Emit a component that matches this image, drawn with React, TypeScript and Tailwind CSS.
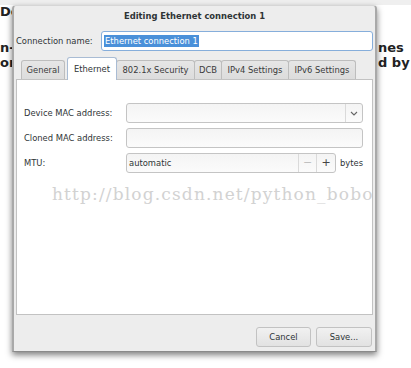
import React from "react";

const TABS = [
  { label: "General", w: "w-[44px]" },
  { label: "Ethernet", w: "w-[50px]", active: true },
  { label: "802.1x Security", w: "w-[79px]" },
  { label: "DCB", w: "w-[28px]" },
  { label: "IPv4 Settings", w: "w-[68px]" },
  { label: "IPv6 Settings", w: "w-[68px]" },
];

function Field({ children }: { children?: React.ReactNode }) {
  return (
    <div className="h-[20px] w-[237px] rounded-[3px] border border-[#c4c4c4] bg-gradient-to-b from-[#f4f4f4] to-[#fbfbfb] flex items-center">
      {children}
    </div>
  );
}

export default function App() {
  return (
    <div className="relative w-[411px] h-[368px] overflow-hidden bg-white font-['DejaVu_Sans',sans-serif] text-[#2e3436]">
      {/* page behind the dialog */}
      <div className="h-[5px] bg-[#efefef]" />
      <div className="text-[13px] font-bold leading-[14px] text-[#222]">
        <div>De</div>
        <div className="mt-[22px] flex justify-between">
          <span>n-</span>
          <span className="w-[33px] whitespace-nowrap overflow-hidden">nes</span>
        </div>
        <div className="mt-[1px] flex justify-between">
          <span>or</span>
          <span className="w-[33px] whitespace-nowrap overflow-hidden">d by</span>
        </div>
      </div>

      {/* dialog */}
      <div className="absolute left-[12px] top-[5px] w-[365px] flex flex-col bg-[#ededed] border-x-2 border-b border-t border-x-[#a9a9a9] border-b-[#8a8a8a] border-t-[#d6d6d6] rounded-t-[4px] shadow-[0_3px_6px_rgba(0,0,0,0.5)] text-[8.4px] pb-[4px]">
        <div className="h-[20px] flex items-center justify-center font-bold">
          Editing Ethernet connection 1
        </div>

        <div className="mt-[5px] h-[20px] flex items-center pl-[2px]">
          <span className="w-[85px]">Connection name:</span>
          <div className="h-[20px] w-[272px] rounded-[3px] border border-[#86aedb] bg-white flex items-center pl-[2px]">
            <span className="bg-[#4a90d9] text-white leading-[12px] px-[1px]">Ethernet connection 1</span>
          </div>
        </div>

        <div className="mt-[6px] h-[22px] flex items-end pl-[7px]">
          {TABS.map((t) =>
            t.active ? (
              <div
                key={t.label}
                className={`${t.w} ml-[2px] h-[23px] -mb-[1px] relative z-10 bg-white border border-b-0 border-[#a9bcd4] rounded-t-[3px] flex items-center justify-center`}
              >
                {t.label}
              </div>
            ) : (
              <div
                key={t.label}
                className={`${t.w} h-[19px] bg-gradient-to-b from-[#e6e6e6] to-[#dcdcdc] border border-b-0 border-[#bdbdbd] -ml-[1px] first:ml-0 rounded-t-[3px] flex items-center justify-center text-[#3a3a3a]`}
              >
                {t.label}
              </div>
            )
          )}
        </div>

        <div className="ml-[2px] w-[357px] h-[236px] bg-white border border-[#c2c2c2] pt-[23px] pl-[7px] flex flex-col gap-[5px]">
          <div className="flex items-center h-[20px]">
            <span className="w-[102px]">Device MAC address:</span>
            <Field>
              <div className="ml-auto h-full w-[17px] border-l border-[#dadada] flex items-center justify-center">
                <svg width="8" height="5" viewBox="0 0 8 5">
                  <path d="M1 1l3 3 3-3" fill="none" stroke="#666" strokeWidth="1.1" />
                </svg>
              </div>
            </Field>
          </div>
          <div className="flex items-center h-[20px]">
            <span className="w-[102px]">Cloned MAC address:</span>
            <Field />
          </div>
          <div className="flex items-center h-[20px]">
            <span className="w-[102px]">MTU:</span>
            <div className="h-[20px] w-[210px] rounded-[3px] border border-[#c4c4c4] bg-gradient-to-b from-[#f4f4f4] to-[#fbfbfb] flex items-center">
              <span className="pl-[2px]">automatic</span>
              <div className="ml-auto h-full w-[18px] border-l border-[#dadada] flex items-center justify-center text-[#c0c0c0] text-[11px]">
                −
              </div>
              <div className="h-full w-[19px] border-l border-[#dadada] flex items-center justify-center text-[#444] text-[11px]">
                +
              </div>
            </div>
            <span className="ml-[4px]">bytes</span>
          </div>
        </div>

        <div className="mt-[12px] flex justify-end gap-[5px] pr-[3px]">
          <div className="w-[55px] h-[20px] rounded-[3px] border border-[#c2c2c2] bg-gradient-to-b from-[#f1f1f1] to-[#e2e2e2] flex items-center justify-center">
            Cancel
          </div>
          <div className="w-[56px] h-[20px] rounded-[3px] border border-[#c2c2c2] bg-gradient-to-b from-[#f1f1f1] to-[#e2e2e2] flex items-center justify-center">
            Save...
          </div>
        </div>
      </div>

      {/* watermark */}
      <div className="absolute left-[52px] top-[182px] text-[17px] font-['DejaVu_Serif',serif] tracking-[1.15px] text-[#d2d2d2] whitespace-nowrap pointer-events-none">
        http://blog.csdn.net/python_bobo
      </div>
    </div>
  );
}
